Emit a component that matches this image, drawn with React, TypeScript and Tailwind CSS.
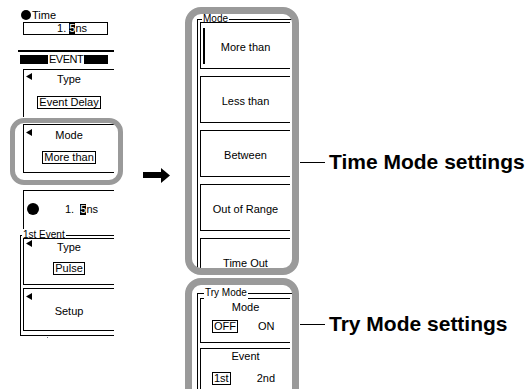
import React from "react";

const Tri = ({ className = "" }: { className?: string }) => (
  <svg width="6" height="7" viewBox="0 0 6 7" className={className}>
    <polygon points="6,0 6,7 0,3.5" fill="#000" />
  </svg>
);

const Cursor = ({ children }: { children: React.ReactNode }) => (
  <span className="bg-black text-white leading-[11px] inline-block">{children}</span>
);

// left side: the softkey menu before selection
const LeftMenu = () => (
  <div className="absolute left-0 top-0 w-[114px] h-[389px] overflow-hidden">
    <div className="mt-[10px] h-[10px] pl-[21px] flex items-center">
      <span className="w-[10px] h-[10px] rounded-full bg-black" />
      <span className="ml-[1px] leading-[10px]">Time</span>
    </div>

    <div className="mt-[2px] ml-[23px] w-[85px] h-[13px] border border-black flex items-center justify-end pr-[20px] leading-[11px]">
      <span>1.&nbsp;</span>
      <Cursor>5</Cursor>
      <span>ns</span>
    </div>

    <div className="mt-[15px] ml-[18px] w-[96px] h-[2px] bg-black" />

    <div className="mt-[3px] ml-[20px] h-[9px] flex items-center">
      <span className="w-[28px] h-[9px] bg-black" />
      <span className="px-[1px] leading-[9px] tracking-[-0.5px]">EVENT</span>
      <span className="w-[24px] h-[9px] bg-black" />
    </div>

    {/* Type */}
    <div className="relative mt-[5px] ml-[23px] h-[48px] border-l border-t border-black flex flex-col items-center pt-[3px]">
      <Tri className="absolute left-[2px] top-[3px]" />
      <span className="leading-[13px]">Type</span>
      <span className="mt-[10px] h-[13px] border border-black px-[1px] leading-[11px]">Event Delay</span>
    </div>

    {/* Mode */}
    <div className="relative mt-[7px] ml-[23px] h-[49px] border-l border-t border-b border-black flex flex-col items-center pt-[4px]">
      <Tri className="absolute left-[2px] top-[4px]" />
      <span className="leading-[13px]">Mode</span>
      <span className="mt-[9px] h-[13px] border border-black px-[1px] leading-[11px]">More than</span>
    </div>

    {/* value */}
    <div className="mt-[17px] ml-[23px] h-[41px] border-l border-t border-black pt-[12px]">
      <div className="flex items-center h-[12px] pl-[3px]">
        <span className="w-[12px] h-[12px] rounded-full bg-black" />
        <span className="ml-[26px] flex items-center leading-[11px]">
          <span>1.&nbsp;&nbsp;</span>
          <Cursor>5</Cursor>
          <span>ns</span>
        </span>
      </div>
    </div>

    {/* 1st Event */}
    <div className="relative mt-[4px] ml-[20px] h-[101px] border-l border-t border-b border-black pl-[2px] pt-[2px]">
      <span className="absolute left-[1px] top-[-7px] bg-white px-[1px] text-[10px] leading-[12px]">1st Event</span>
      <div className="relative h-[47px] border-l border-t border-b border-black flex flex-col items-center pt-[2px]">
        <Tri className="absolute left-[2px] top-[1px]" />
        <span className="leading-[13px]">Type</span>
        <span className="mt-[8px] h-[13px] border border-black px-[1px] leading-[11px]">Pulse</span>
      </div>
      <div className="relative mt-[3px] h-[43px] border-l border-t border-b border-black flex items-center justify-center pt-[4px]">
        <Tri className="absolute left-[2px] top-[4px]" />
        <span className="leading-[13px]">Setup</span>
      </div>
    </div>
    <div className="mt-[1px] ml-[47px] w-[1px] h-[1px] bg-gray-500" />
  </div>
);

const modes = ["More than", "Less than", "Between", "Out of Range", "Time Out"];

export default function App() {
  return (
    <div
      className="relative w-[528px] h-[389px] overflow-hidden bg-white text-black text-[11px]"
      style={{ fontFamily: '"Liberation Sans", Arial, sans-serif' }}
    >
      <LeftMenu />

      {/* highlight around Mode key */}
      <div className="absolute left-[10px] top-[118px] w-[113px] h-[67px] border-[5px] border-[#9a9a9a] rounded-[14px]" />

      {/* arrow */}
      <svg className="absolute left-[143px] top-[167px]" width="28" height="17" viewBox="0 0 28 17">
        <rect x="0" y="5" width="19" height="6" fill="#000" />
        <polygon points="18,1 27,8.5 18,16" fill="#000" />
      </svg>

      {/* Time mode menu */}
      <div className="absolute left-[185px] top-[7px] w-[114px] h-[268px] border-[7px] border-[#9a9a9a] rounded-[16px] overflow-hidden bg-white pt-[5px] pl-[5px]">
        <div className="relative border-l border-t border-black pt-[2px] pl-[2px] h-[300px]">
          <span className="absolute left-[4px] top-[-7px] bg-white px-[1px] text-[10px] leading-[12px]">Mode</span>
          <div className="flex flex-col gap-[7px]">
            {modes.map((m, i) => (
              <div
                key={m}
                className="relative w-[90px] h-[47px] border-l border-t border-b border-black flex items-center justify-center pt-[4px]"
              >
                {i === 0 && <span className="absolute left-[2px] top-[5px] w-[2px] h-[36px] bg-black" />}
                <span className="leading-[13px]">{m}</span>
              </div>
            ))}
          </div>
        </div>
      </div>

      {/* Try mode menu */}
      <div className="absolute left-[185px] top-[278px] w-[114px] h-[130px] border-[7px] border-[#9a9a9a] rounded-[16px] overflow-hidden bg-white pt-[8px] pl-[5px]">
        <div className="relative border-l border-t border-black pt-[4px] pl-[2px] h-[200px]">
          <span className="absolute left-[6px] top-[-7px] bg-white px-[1px] text-[10px] leading-[12px]">Try Mode</span>
          <div className="w-[90px] h-[45px] border-l border-t border-b border-black flex flex-col items-center pt-[2px]">
            <span className="leading-[13px]">Mode</span>
            <div className="mt-[6px] w-full flex items-center pl-[11px] gap-[20px]">
              <span className="h-[13px] border border-black px-[1px] leading-[11px]">OFF</span>
              <span className="leading-[13px]">ON</span>
            </div>
          </div>
          <div className="mt-[5px] w-[90px] h-[60px] border-l border-t border-black flex flex-col items-center pt-[1px]">
            <span className="leading-[13px]">Event</span>
            <div className="mt-[9px] w-full flex items-center pl-[11px] gap-[26px]">
              <span className="h-[13px] border border-black px-[1px] leading-[11px]">1st</span>
              <span className="leading-[13px]">2nd</span>
            </div>
          </div>
        </div>
      </div>

      {/* callouts */}
      <div className="absolute left-[300px] top-[150px] flex items-center">
        <span className="w-[25px] h-[1px] bg-black" />
        <span className="ml-[4px] text-[21px] font-bold leading-[24px]">Time Mode settings</span>
      </div>
      <div className="absolute left-[300px] top-[312px] flex items-center">
        <span className="w-[25px] h-[1px] bg-black" />
        <span className="ml-[4px] text-[21px] font-bold leading-[24px]">Try Mode settings</span>
      </div>
    </div>
  );
}
